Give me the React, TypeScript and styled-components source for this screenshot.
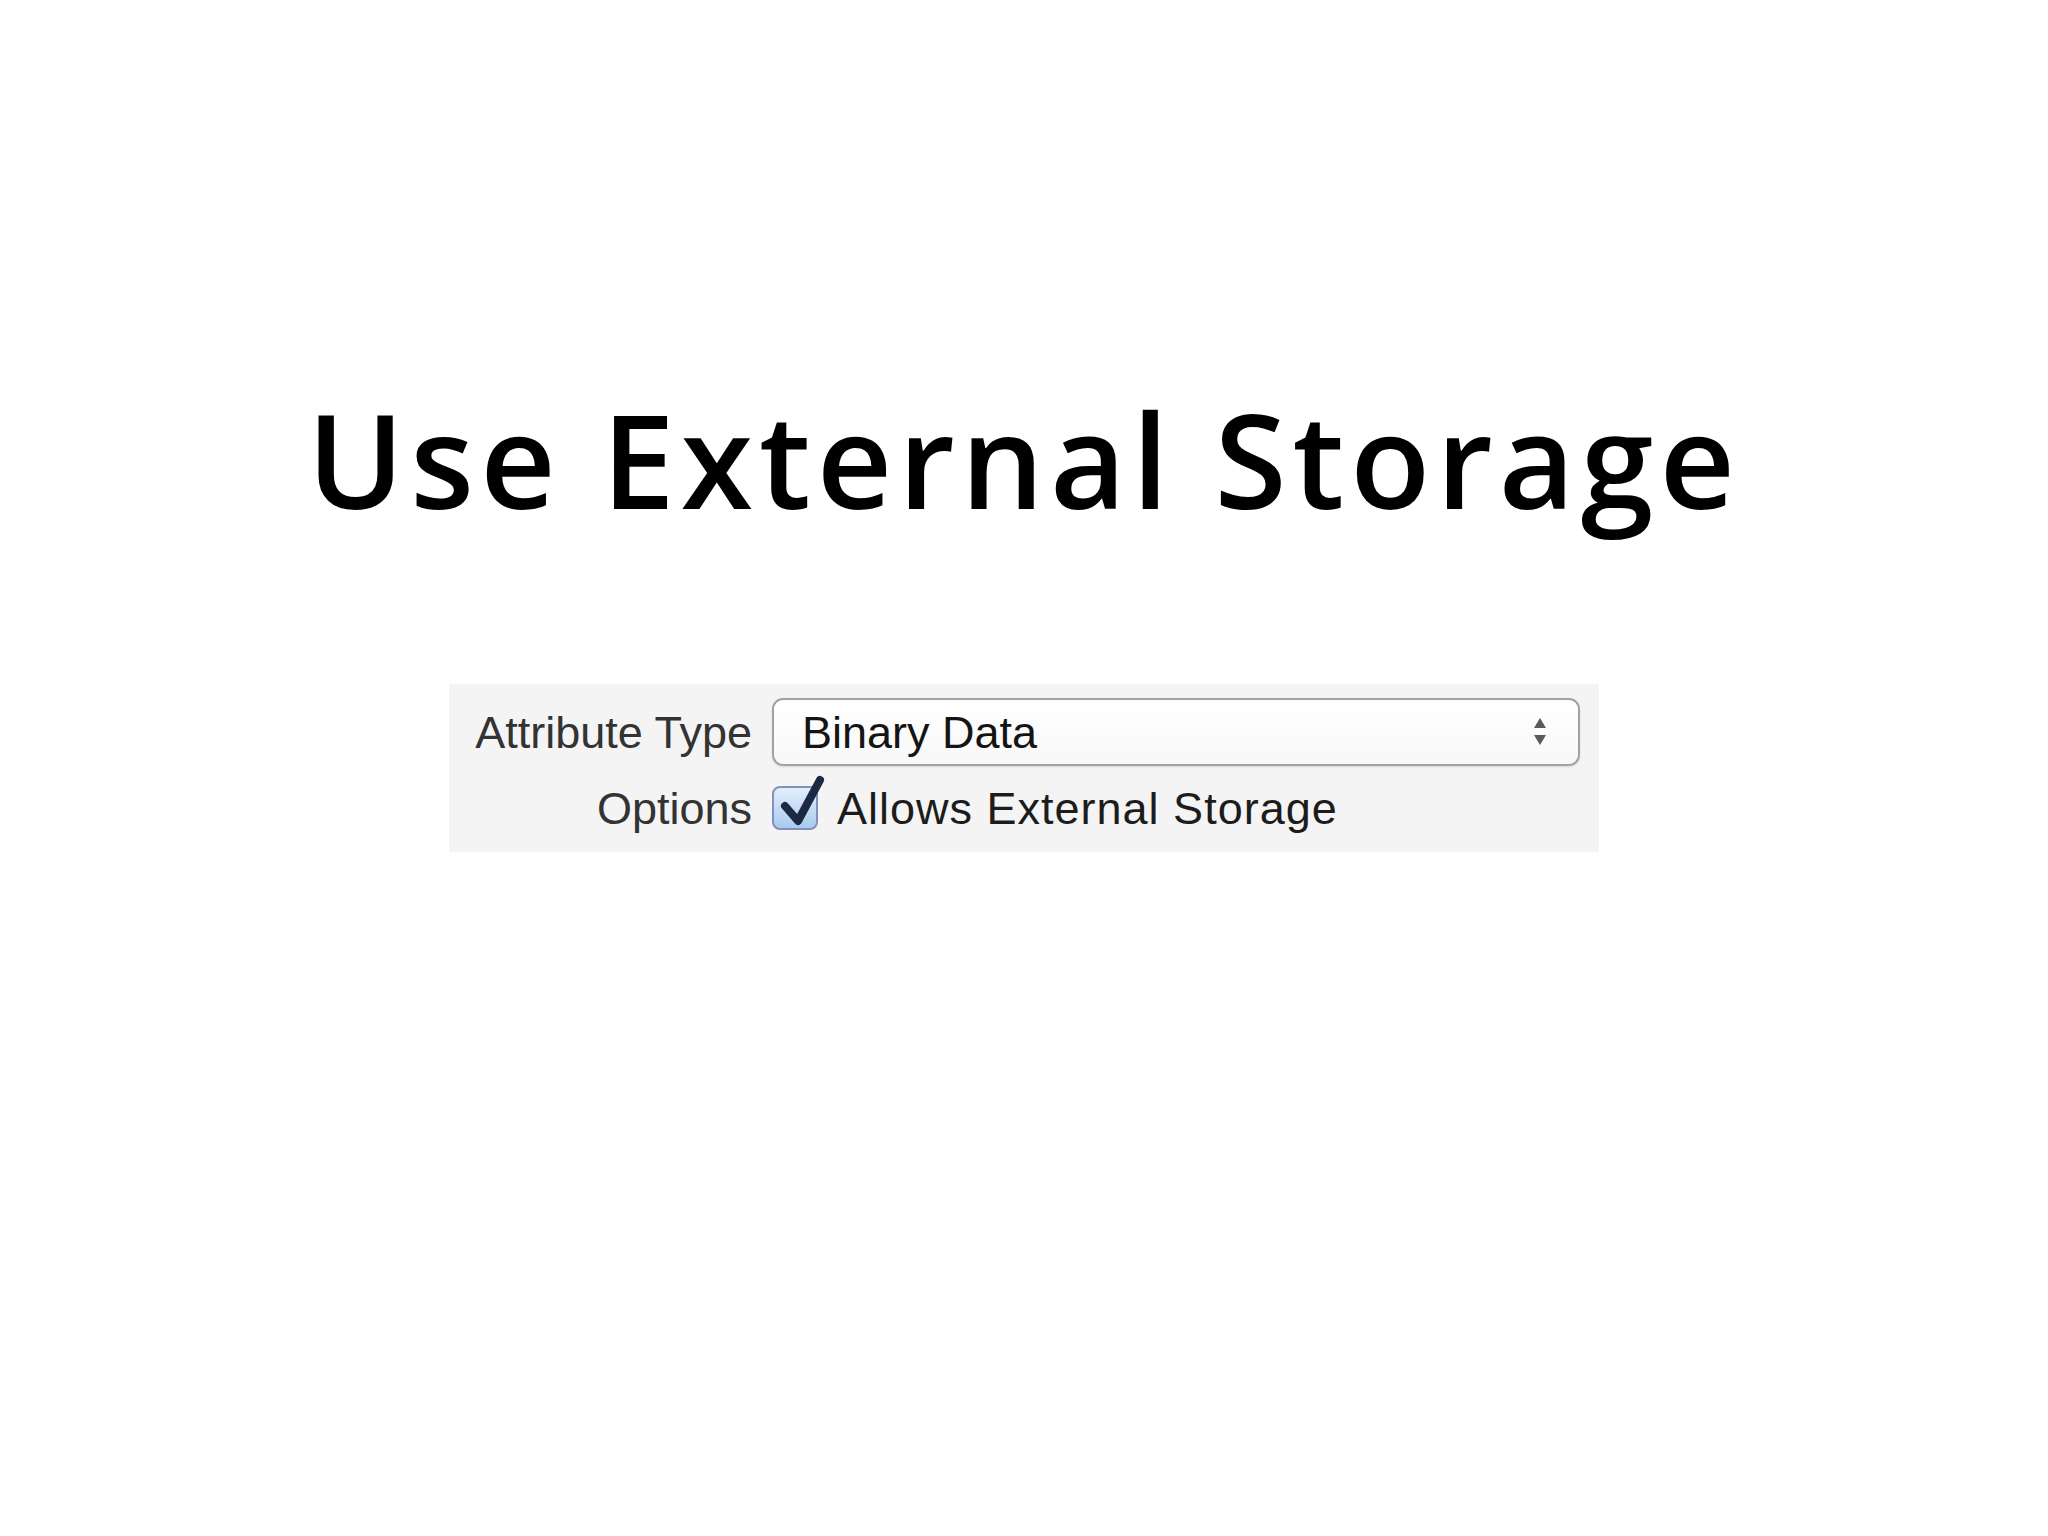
import React from 'react'
import styled, { createGlobalStyle } from 'styled-components'

const GlobalStyle = createGlobalStyle`
    html, body {
        margin: 0;
        padding: 0;
        background: #ffffff;
    }
`

const Page = styled.main`
    min-height: 1536px;
    box-sizing: border-box;
    padding-top: 393px;
    display: flex;
    flex-direction: column;
    align-items: center;
`

const Title = styled.h1`
    margin: 0;
    font-family: "Open Sans", "Liberation Sans", sans-serif;
    font-weight: 600;
    font-size: 131px;
    line-height: 1;
    letter-spacing: 6px;
    color: #000;
`

const Panel = styled.section`
    margin-top: 160px;
    width: 1150px;
    height: 168px;
    box-sizing: border-box;
    padding: 14px 19px 0 0;
    background: #f4f4f4;
    display: grid;
    grid-template-columns: 303px 1fr;
    grid-auto-rows: auto;
    column-gap: 20px;
    row-gap: 14px;
    align-content: start;
    font-family: "Liberation Sans", Arial, sans-serif;
    font-size: 45px;
    line-height: 1;
`

const Label = styled.div`
    justify-self: end;
    align-self: center;
    color: #333;
    white-space: nowrap;
`

const Select = styled.div`
    height: 68px;
    box-sizing: border-box;
    border: 2px solid #a2a2a2;
    border-radius: 11px;
    background: linear-gradient(#ffffff, #f8f8f8);
    box-shadow: 0 1px 2px rgba(0, 0, 0, 0.12);
    display: flex;
    align-items: center;
    justify-content: space-between;
    padding: 0 30px 0 28px;
    color: #141414;
`

const Arrows = styled.svg`
    width: 16px;
    height: 32px;
`

const OptionRow = styled.div`
    height: 56px;
    display: flex;
    align-items: center;
    gap: 19px;
    color: #1c1c1c;
`

const OptionText = styled.span`
    letter-spacing: 1px;
`

const CheckBox = styled.span`
    position: relative;
    width: 46px;
    height: 44px;
    box-sizing: border-box;
    border: 2px solid #8390bd;
    border-radius: 8px;
    background: linear-gradient(#e2eefb, #a9cbee);
    flex-shrink: 0;

    svg {
        position: absolute;
        left: 0;
        top: 0;
        overflow: visible;
    }
`

const App = () => {
    return (
        <>
            <GlobalStyle />
            <Page>
                <Title>Use External Storage</Title>
                <Panel>
                    <Label>Attribute Type</Label>
                    <Select>
                        <span>Binary Data</span>
                        <Arrows viewBox="0 0 16 32">
                            <path d="M8 2 L14 12 L2 12 Z" fill="#5a5a5a" />
                            <path d="M2 19 L14 19 L8 29 Z" fill="#5a5a5a" />
                        </Arrows>
                    </Select>
                    <Label>Options</Label>
                    <OptionRow>
                        <CheckBox>
                            <svg width="46" height="44" viewBox="0 0 46 44">
                                <path
                                    d="M11 18 L24 33 L46 -8"
                                    fill="none"
                                    stroke="#1b2945"
                                    strokeWidth="8"
                                    strokeLinecap="round"
                                    strokeLinejoin="round"
                                />
                            </svg>
                        </CheckBox>
                        <OptionText>Allows External Storage</OptionText>
                    </OptionRow>
                </Panel>
            </Page>
        </>
    )
}

export default App
